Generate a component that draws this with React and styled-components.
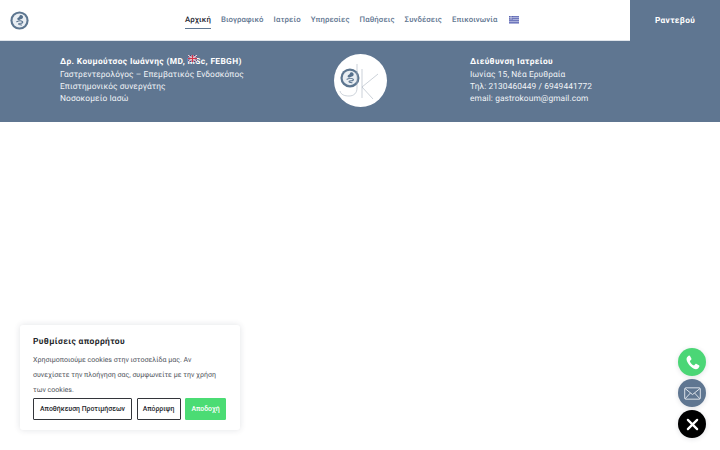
import React from "react";
import styled, { createGlobalStyle } from "styled-components";

const slate = "#5f7691";

const GlobalStyle = createGlobalStyle`
  html, body {
    margin: 0;
    padding: 0;
    background: #fff;
    font-family: "Roboto", "Liberation Sans", sans-serif;
    text-rendering: geometricPrecision;
  }
  * { box-sizing: border-box; }
`;

const Page = styled.div`
  position: relative;
  width: 720px;
  height: 450px;
  overflow: hidden;
  background: #fff;
`;

const Header = styled.header`
  display: flex;
  align-items: stretch;
  height: 41px;
  background: #fff;
  border-bottom: 1px solid #dfe4ea;
`;

const LogoSlot = styled.a`
  display: flex;
  align-items: center;
  width: 185px;
  padding-left: 10px;
`;

const Nav = styled.nav`
  display: flex;
  align-items: center;
  gap: 10px;
  flex: 1;
`;

const NavItem = styled.a`
  display: flex;
  align-items: center;
  height: 18px;
  padding-bottom: 1px;
  font-size: 7.8px;
  font-weight: 500;
  letter-spacing: 0.1px;
  white-space: nowrap;
  color: ${(props) => (props.$active ? "#1c2430" : slate)};
  border-bottom: 1px solid ${(props) => (props.$active ? slate : "transparent")};
`;

const FlagSlot = styled.span`
  display: flex;
  margin-left: 2px;
`;

const BookButton = styled.a`
  display: flex;
  align-items: center;
  justify-content: center;
  width: 90px;
  margin-bottom: -1px;
  background: ${slate};
  color: #fff;
  font-size: 8.4px;
  font-weight: 700;
  letter-spacing: 0.3px;
`;

const InfoBand = styled.section`
  display: grid;
  grid-template-columns: repeat(3, 200px);
  align-items: center;
  height: 81px;
  padding: 0 60px;
  background: ${slate};
  color: #fff;
`;

const InfoBlock = styled.div`
  position: relative;
  padding-left: ${(props) => (props.$inset ? "10px" : "0")};
  padding-bottom: 2px;
  white-space: nowrap;
`;

const InfoTitle = styled.div`
  font-size: 8.4px;
  font-weight: 700;
  letter-spacing: 0.36px;
  line-height: 13px;
`;

const InfoLine = styled.div`
  font-size: 8.35px;
  line-height: 12.2px;
  letter-spacing: 0.1px;
  color: #f1f4f7;
`;

const FloatingFlag = styled.span`
  position: absolute;
  left: 128px;
  top: -1px;
  display: flex;
`;

const BadgeWrap = styled.div`
  display: flex;
  justify-content: center;
  margin-bottom: 2px;
`;

const Badge = styled.div`
  display: flex;
  align-items: center;
  justify-content: center;
  width: 53px;
  height: 53px;
  border-radius: 50%;
  background: #fff;
`;

const CookiePanel = styled.aside`
  position: absolute;
  left: 20px;
  top: 325px;
  width: 220px;
  height: 105px;
  padding: 11px 13px 0;
  background: #fff;
  border-radius: 3px;
  box-shadow: 0 0 6px rgba(40, 50, 70, 0.14);
`;

const CookieTitle = styled.div`
  font-size: 8.5px;
  font-weight: 700;
  letter-spacing: 0.35px;
  line-height: 12px;
  color: #26282c;
`;

const CookieText = styled.p`
  margin: 4px 0 1px;
  padding-right: 4px;
  font-size: 7.05px;
  line-height: 15px;
  color: #4f545c;
`;

const CookieActions = styled.div`
  display: flex;
  gap: 4.5px;
`;

const CookieButton = styled.button`
  height: 22px;
  padding: 0;
  width: ${(props) => props.$width}px;
  border-radius: 1px;
  border: 1.5px solid ${(props) => (props.$accept ? "#4bdc74" : "#33353a")};
  background: ${(props) => (props.$accept ? "#4bdc74" : "#fff")};
  color: ${(props) => (props.$accept ? "#fff" : "#26282c")};
  font-family: inherit;
  font-size: 6.9px;
  font-weight: 500;
  white-space: nowrap;
`;

const FabStack = styled.div`
  position: absolute;
  left: 678px;
  top: 348px;
  display: flex;
  flex-direction: column;
  gap: 3px;
`;

const Fab = styled.a`
  display: flex;
  align-items: center;
  justify-content: center;
  width: 28px;
  height: 28px;
  border-radius: 50%;
  background: ${(props) => props.$bg};
  box-shadow: 0 1px 5px rgba(40, 50, 70, 0.14);
`;

const GutMark = ({ size }) => (
  <svg width={size} height={size} viewBox="0 0 24 24">
    <circle cx="12" cy="12" r="11.500" fill="#5d7690" />
    <circle cx="12" cy="12" r="8.800" fill="#e9eef3" />
    <path
      d="M13.500 5c2.400 0 3.500 1.800 2.800 3.600-.6 1.500-2.800 1.600-4 2.400-1.200.8-2.900.4-3.100-.9-.2-1.300 1.200-1.600 2-2.200.7-.7.900-2.900 2.300-2.900z"
      fill="#56708c"
    />
    <path
      d="M8.500 13.500c2.300-1.100 6-1.100 7.300 0 1 1-.5 1.900-2 1.900-1.600 0-3.400.2-2.800 1.300.5.800 2.500.7 3.400 1.100"
      fill="none"
      stroke="#56708c"
      strokeWidth="1.300"
      strokeLinecap="round"
    />
  </svg>
);

const BadgeLogo = () => (
  <svg width="46" height="40" viewBox="0 0 46 40">
    <g transform="translate(3 7) scale(0.83)">
      <circle cx="12" cy="12" r="11.500" fill="#5d7690" />
      <circle cx="12" cy="12" r="8.800" fill="#e9eef3" />
      <path
        d="M13.500 5c2.400 0 3.500 1.800 2.800 3.600-.6 1.500-2.800 1.600-4 2.400-1.200.8-2.900.4-3.100-.9-.2-1.300 1.200-1.600 2-2.200.7-.7.900-2.900 2.300-2.900z"
        fill="#56708c"
      />
      <path
        d="M8.500 13.500c2.300-1.100 6-1.100 7.300 0 1 1-.5 1.900-2 1.900-1.600 0-3.400.2-2.800 1.300.5.800 2.500.7 3.400 1.100"
        fill="none"
        stroke="#56708c"
        strokeWidth="1.300"
        strokeLinecap="round"
      />
    </g>
    <g fill="none" stroke="#a9b4c0" strokeWidth="0.600">
      <path d="M20 3v24c0 5-3 8-8 8-4 0-8-1-9-5" />
      <path d="M25 8v29" />
      <path d="M41 13 25 26l11 12" />
    </g>
  </svg>
);

const GreekFlag = () => (
  <svg width="10" height="8" viewBox="0 0 10 8">
    <rect width="10" height="8" fill="#6f78bd" />
    <path d="M0 1.500h10M0 3.500h10M0 5.500h10M0 7.500h10" stroke="#c5c9e6" strokeWidth="0.700" />
    <rect width="4" height="3.500" fill="#5a64b0" />
    <path d="M2 0v3.500M0 1.750h4" stroke="#dfe1f2" strokeWidth="0.700" />
  </svg>
);

const UkFlag = () => (
  <svg width="9" height="7" viewBox="0 0 9 7">
    <rect width="9" height="7" fill="#3d3f73" />
    <path d="M0 0l9 7M9 0L0 7" stroke="#f0d5da" strokeWidth="1.200" />
    <path d="M4.500 0v7M0 3.500h9" stroke="#f0d5da" strokeWidth="2.200" />
    <path d="M4.500 0v7M0 3.500h9" stroke="#d3344a" strokeWidth="1.200" />
  </svg>
);

const PhoneIcon = () => (
  <svg width="17" height="17" viewBox="0 0 24 24" fill="#fff">
    <path d="M6.600 2.400c.7-.4 1.500-.2 1.900.5l1.900 3.400c.3.600.2 1.300-.3 1.800L8.600 9.500c-.3.300-.3.700-.2 1 .9 2.100 2.900 4.500 5 5.500.4.200.8.100 1.100-.2l1.400-1.500c.5-.5 1.200-.6 1.800-.3l3.400 1.900c.7.400.9 1.200.6 1.900-.9 2-2.600 4-5 3.900C9.400 19.500 4.400 13 3.600 7.800 3.300 5.500 4.800 3.400 6.600 2.400z" />
  </svg>
);

const MailIcon = () => (
  <svg width="17" height="13" viewBox="0 0 24 18" fill="none" stroke="#e8edf2" strokeWidth="1.300">
    <rect x="1" y="1" width="22" height="16" rx="1.500" />
    <path d="M1.500 2 12 10.500 22.500 2" />
    <path d="M1.500 16.500 9 8.400M22.500 16.500 15 8.400" />
  </svg>
);

const CloseIcon = () => (
  <svg width="13" height="13" viewBox="0 0 14 14" stroke="#fff" strokeWidth="2.400" strokeLinecap="round">
    <path d="M2 2l10 10M12 2L2 12" />
  </svg>
);

const navItems = [
  "Αρχική",
  "Βιογραφικό",
  "Ιατρείο",
  "Υπηρεσίες",
  "Παθήσεις",
  "Συνδέσεις",
  "Επικοινωνία",
];

const App = () => {
  return (
    <Page>
      <GlobalStyle />

      <Header>
        <LogoSlot>
          <GutMark size={19} />
        </LogoSlot>
        <Nav>
          {navItems.map((item, index) => (
            <NavItem key={item} $active={index === 0}>
              {item}
            </NavItem>
          ))}
          <FlagSlot>
            <GreekFlag />
          </FlagSlot>
        </Nav>
        <BookButton>Ραντεβού</BookButton>
      </Header>

      <InfoBand>
        <InfoBlock>
          <InfoTitle>Δρ. Κουμούτσος Ιωάννης (MD, MSc, FEBGH)</InfoTitle>
          <FloatingFlag>
            <UkFlag />
          </FloatingFlag>
          <InfoLine>Γαστρεντερολόγος – Επεμβατικός Ενδοσκόπος</InfoLine>
          <InfoLine>Επιστημονικός συνεργάτης</InfoLine>
          <InfoLine>Νοσοκομείο Ιασώ</InfoLine>
        </InfoBlock>
        <BadgeWrap>
          <Badge>
            <BadgeLogo />
          </Badge>
        </BadgeWrap>
        <InfoBlock $inset>
          <InfoTitle>Διεύθυνση Ιατρείου</InfoTitle>
          <InfoLine>Ιωνίας 15, Νέα Ερυθραία</InfoLine>
          <InfoLine>Τηλ: 2130460449 / 6949441772</InfoLine>
          <InfoLine>email: gastrokoum@gmail.com</InfoLine>
        </InfoBlock>
      </InfoBand>

      <CookiePanel>
        <CookieTitle>Ρυθμίσεις απορρήτου</CookieTitle>
        <CookieText>
          Χρησιμοποιούμε cookies στην ιστοσελίδα μας. Αν συνεχίσετε την πλοήγηση
          σας, συμφωνείτε με την χρήση των cookies.
        </CookieText>
        <CookieActions>
          <CookieButton $width={99}>Αποθήκευση Προτιμήσεων</CookieButton>
          <CookieButton $width={44}>Απόρριψη</CookieButton>
          <CookieButton $width={41} $accept>
            Αποδοχή
          </CookieButton>
        </CookieActions>
      </CookiePanel>

      <FabStack>
        <Fab $bg="#4bd676">
          <PhoneIcon />
        </Fab>
        <Fab $bg={slate}>
          <MailIcon />
        </Fab>
        <Fab $bg="#000">
          <CloseIcon />
        </Fab>
      </FabStack>
    </Page>
  );
};

export default App;
